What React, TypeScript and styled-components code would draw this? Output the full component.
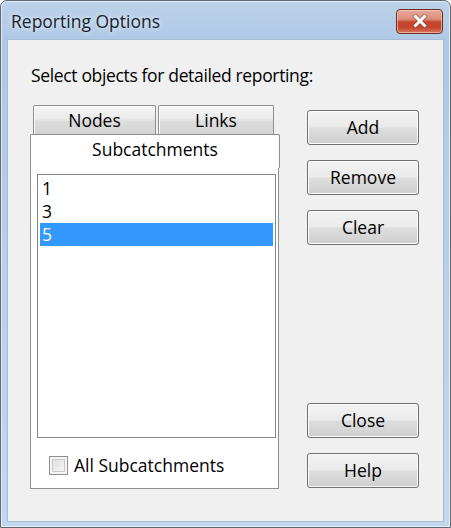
import React from "react";
import styled, { createGlobalStyle } from "styled-components";

const Global = createGlobalStyle`
  html, body { margin: 0; padding: 0; background: #ffffff; }
  body { width: 451px; height: 528px; overflow: hidden; font-family: "Open Sans", "Noto Sans", sans-serif; }
`;

const Window = styled.div`
  box-sizing: border-box;
  width: 451px;
  height: 528px;
  display: flex;
  flex-direction: column;
  border: 1px solid #5d6874;
  border-radius: 7px 7px 0 0;
  background: linear-gradient(180deg, #bcd2ea 0%, #aec8e5 8%, #b8cfe9 50%, #c3d8ee 100%);
  box-shadow: inset 0 0 0 1px #e4eef9;
`;

const TitleBar = styled.div`
  height: 37px;
  flex: none;
  display: flex;
  align-items: center;
  justify-content: space-between;
  padding: 0 7px 0 10px;
`;

const Title = styled.div`
  font-size: 17.5px;
  color: #1a232c;
  text-shadow: 0 0 6px rgba(255, 255, 255, 0.9);
  margin-top: 3px;
`;

const CloseButton = styled.div`
  width: 47px;
  height: 25px;
  box-sizing: border-box;
  margin-top: 3px;
  border: 1px solid #6b2e24;
  border-radius: 4px;
  background: linear-gradient(180deg, #e9a99a 0%, #dc8c79 40%, #c6472f 52%, #c4452e 75%, #d87a5e 100%);
  box-shadow: inset 0 0 0 1px rgba(255, 210, 200, 0.6);
  display: flex;
  align-items: center;
  justify-content: center;
`;

const Client = styled.div`
  flex: 1;
  margin: 1px 6px 5px 6px;
  background: #f0f0f0;
  border: 1px solid #a7bbd1;
  display: flex;
  flex-direction: column;
  font-size: 17.5px;
  color: #000;
`;

const Heading = styled.div`
  margin: 25px 0 0 23px;
  line-height: 20px;
  height: 20px;
  letter-spacing: -0.35px;
`;

const Body = styled.div`
  display: flex;
  margin-top: 20px;
`;

const LeftCol = styled.div`
  margin-left: 22px;
  width: 250px;
  display: flex;
  flex-direction: column;
`;

const TabRow = styled.div`
  display: flex;
  gap: 2px;
  padding-left: 3px;
  height: 29px;
`;

const Tab = styled.div<{ $w: number }>`
  box-sizing: border-box;
  width: ${(p) => p.$w}px;
  height: 29px;
  border: 1px solid #8c8e94;
  border-bottom: none;
  border-radius: 2px 2px 0 0;
  background: linear-gradient(180deg, #f4f4f4 0%, #ebebeb 45%, #dcdcdc 55%, #d4d4d4 100%);
  box-shadow: inset 0 1px 0 #ffffff, inset 1px 0 0 #fbfbfb;
  display: flex;
  align-items: center;
  justify-content: center;
  line-height: 20px;
  padding-top: 0px;
`;

const ActiveTab = styled.div`
  box-sizing: border-box;
  width: 250px;
  height: 34px;
  border: 1px solid #8c8e94;
  border-bottom: none;
  border-radius: 2px 2px 0 0;
  background: #ffffff;
  display: flex;
  align-items: center;
  justify-content: center;
  padding-bottom: 5px;
`;

const Panel = styled.div`
  box-sizing: border-box;
  width: 249px;
  height: 321px;
  border: 1px solid #8c8e94;
  border-top: none;
  background: #ffffff;
  display: flex;
  flex-direction: column;
  padding: 6px 0 0 6px;
`;

const ListBox = styled.div`
  box-sizing: border-box;
  width: 239px;
  height: 264px;
  border: 1px solid #828790;
  background: #ffffff;
  padding: 2px 2px;
  display: flex;
  flex-direction: column;
`;

const Item = styled.div<{ $selected?: boolean }>`
  height: 23px;
  line-height: 23px;
  padding-left: 2px;
  background: ${(p) => (p.$selected ? "#3399ff" : "transparent")};
  color: ${(p) => (p.$selected ? "#ffffff" : "#000000")};
`;

const CheckRow = styled.label`
  display: flex;
  align-items: center;
  gap: 6px;
  margin: 17px 0 0 12px;
  line-height: 20px;
`;

const CheckBox = styled.span`
  box-sizing: border-box;
  width: 19px;
  height: 19px;
  border: 1px solid #8f8f8f;
  background: linear-gradient(135deg, #d8d8d8 0%, #eeeeee 60%, #fafafa 100%);
  box-shadow: inset 0 0 0 2px #f4f4f4, inset 0 0 0 3px #c9c9c9;
`;

const RightCol = styled.div`
  margin-left: 27px;
  width: 112px;
  display: flex;
  flex-direction: column;
  padding-top: 5px;
`;

const Button = styled.div<{ $gapTop?: number }>`
  box-sizing: border-box;
  width: 112px;
  height: 35px;
  margin-top: ${(p) => p.$gapTop ?? 0}px;
  border: 1px solid #707070;
  border-radius: 3px;
  background: linear-gradient(180deg, #f2f2f2 0%, #ebebeb 48%, #dddddd 52%, #cfcfcf 100%);
  box-shadow: inset 0 0 0 1px #fcfcfc;
  display: flex;
  align-items: center;
  justify-content: center;
  line-height: 20px;
  padding-bottom: 2px;
`;

export default function App() {
  return (
    <>
      <Global />
      <Window>
        <TitleBar>
          <Title>Reporting Options</Title>
          <CloseButton>
            <svg width="18" height="14" viewBox="0 0 18 14">
              <path
                d="M4.5 2.5 L13.5 11.5 M13.5 2.5 L4.5 11.5"
                fill="none"
                stroke="#7a3328"
                strokeWidth="4.6"
                strokeLinecap="square"
                opacity="0.45"
              />
              <path
                d="M4.5 2.5 L13.5 11.5 M13.5 2.5 L4.5 11.5"
                fill="none"
                stroke="#ffffff"
                strokeWidth="3"
                strokeLinecap="square"
              />
            </svg>
          </CloseButton>
        </TitleBar>
        <Client>
          <Heading>Select objects for detailed reporting:</Heading>
          <Body>
            <LeftCol>
              <TabRow>
                <Tab $w={123}>Nodes</Tab>
                <Tab $w={116}>Links</Tab>
              </TabRow>
              <ActiveTab>Subcatchments</ActiveTab>
              <Panel>
                <ListBox>
                  <Item>1</Item>
                  <Item>3</Item>
                  <Item $selected>5</Item>
                </ListBox>
                <CheckRow>
                  <CheckBox />
                  All Subcatchments
                </CheckRow>
              </Panel>
            </LeftCol>
            <RightCol>
              <Button>Add</Button>
              <Button $gapTop={15}>Remove</Button>
              <Button $gapTop={15}>Clear</Button>
              <Button $gapTop={158}>Close</Button>
              <Button $gapTop={15}>Help</Button>
            </RightCol>
          </Body>
        </Client>
      </Window>
    </>
  );
}
